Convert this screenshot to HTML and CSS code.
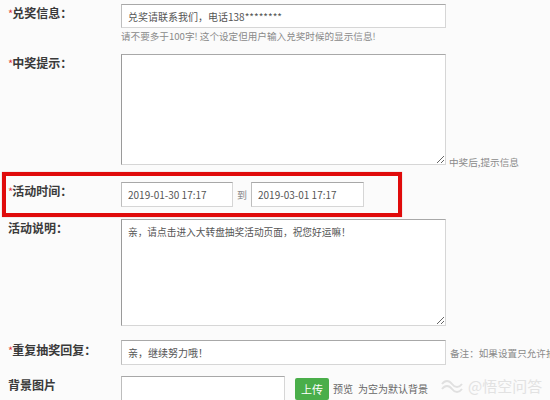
FILE: index.html
```html
<!DOCTYPE html>
<html lang="zh">
<head>
<meta charset="utf-8">
<link rel="stylesheet" href="styles.css">
</head>
<body>
<div class="page">
  <div class="row r1">
    <div class="label"><span class="req">*</span>兑奖信息：</div>
    <div class="field col">
      <input class="txt wide" type="text" value="兑奖请联系我们，电话138********">
      <div class="hint">请不要多于100字! 这个设定但用户输入兑奖时候的显示信息!</div>
    </div>
  </div>
  <div class="row r2">
    <div class="label"><span class="req">*</span>中奖提示：</div>
    <div class="field bottom">
      <textarea class="area a1"></textarea>
      <span class="note note-b">中奖后,提示信息</span>
    </div>
  </div>
  <div class="row r3">
    <div class="label"><span class="req">*</span>活动时间：</div>
    <div class="field mid">
      <input class="txt date d1" type="text" value="2019-01-30 17:17">
      <span class="to">到</span>
      <input class="txt date d2" type="text" value="2019-03-01 17:17">
    </div>
  </div>
  <div class="row r4">
    <div class="label">活动说明：</div>
    <div class="field">
      <textarea class="area a2">亲，请点击进入大转盘抽奖活动页面，祝您好运嘛！</textarea>
    </div>
  </div>
  <div class="row r5">
    <div class="label lh20"><span class="req">*</span>重复抽奖回复：</div>
    <div class="field mid">
      <input class="txt wide h25" type="text" value="亲，继续努力哦！">
      <span class="note note-r">备注：如果设置只允许抽</span>
    </div>
  </div>
  <div class="row r6">
    <div class="label">背景图片</div>
    <div class="field top">
      <input class="txt bg" type="text" value="">
      <button class="upload" type="button">上传</button>
      <span class="link">预览</span>
      <span class="tip">为空为默认背景</span>
    </div>
  </div>

  <div class="mark"></div>
  <div class="watermark">
    <svg class="wm-logo" width="24" height="14" viewBox="0 0 24 14">
      <path d="M2 5 C5 1 9 1 12 5 C15 9 19 9 22 5" fill="none" stroke="#e0e0e0" stroke-width="2"/>
      <path d="M2 10 C5 6 9 6 12 10 C15 14 19 14 22 10" fill="none" stroke="#e0e0e0" stroke-width="2"/>
    </svg>
    <span class="wm-text">@悟空问答</span>
  </div>
</div>
</body>
</html>
```

FILE: styles.css
```css
html, body {
  margin: 0;
  padding: 0;
  background: #fbfbfb;
}
.page {
  position: relative;
  width: 550px;
  height: 400px;
  overflow: hidden;
  padding-left: 8px;
  box-sizing: border-box;
  font-family: "Noto Sans CJK SC", "Microsoft YaHei", sans-serif;
  color: #555;
}
.row {
  display: flex;
  align-items: flex-start;
}
.label {
  width: 113px;
  flex: none;
  font-size: 12px;
  line-height: 18px;
  font-weight: bold;
  color: #3a3a3a;
  white-space: nowrap;
}
.lh20 { line-height: 20px; }
.req {
  color: #e23b3b;
  font-weight: normal;
  font-size: 11px;
  margin-right: -1px;
}
.field {
  display: flex;
  align-items: flex-start;
}
.field.col { flex-direction: column; }
.field.bottom { align-items: flex-end; }
.field.mid { align-items: center; }
.field.top { align-items: flex-start; }

.txt {
  box-sizing: border-box;
  margin: 0;
  padding: 0 6px;
  background: #fff;
  border: 1px solid #d6d6d6;
  border-top-color: #a8a8a8;
  border-left-color: #bdbdbd;
  font-family: "Noto Sans CJK SC", sans-serif;
  font-size: 10px;
  color: #555;
  outline: none;
}
.wide { width: 325px; height: 24px; }
.h25 { height: 25px; }
.hint {
  margin-top: 1px;
  font-size: 9.6px;
  line-height: 14px;
  color: #8a8a8a;
  white-space: nowrap;
}
.area {
  box-sizing: border-box;
  margin: 0;
  width: 325px;
  padding: 5px 6px;
  background: #fff;
  border: 1px solid #d6d6d6;
  border-top-color: #a8a8a8;
  border-left-color: #9a9a9a;
  font-family: "Noto Sans CJK SC", sans-serif;
  font-size: 9.7px;
  line-height: 14px;
  color: #555;
  outline: none;
  display: block;
}
.a1 { height: 111px; }
.a2 { height: 107px; }
.note {
  font-size: 9.6px;
  color: #8a8a8a;
  white-space: nowrap;
}
.note-b { margin-left: 3px; line-height: 12px; margin-bottom: -3px; }
.note-r { margin-left: 4px; }

.r1 { margin-top: 4px; }
.r2 { margin-top: 11px; }
.r3 { margin-top: 17px; }
.r4 { margin-top: 12px; }
.r5 { margin-top: 14px; }
.r6 { margin-top: 11px; }

.date { height: 25px; font-size: 10px; }
.d1 { width: 112px; }
.d2 { width: 113px; }
.to {
  font-size: 10px;
  color: #8a8a8a;
  margin: 0 4px 0 4px;
}
.bg { width: 164px; height: 26px; }
.upload {
  margin: 2px 0 0 10px;
  width: 34px;
  height: 22px;
  padding: 0;
  border: none;
  border-radius: 2px;
  background: #4aae4a;
  color: #fff;
  font-family: "Noto Sans CJK SC", sans-serif;
  font-size: 11px;
  line-height: 22px;
}
.link, .tip {
  font-size: 10px;
  line-height: 22px;
  margin-top: 2px;
  color: #666;
  white-space: nowrap;
}
.link { margin-left: 4px; }
.tip { margin-left: 5px; }

.mark {
  position: absolute;
  left: 2px;
  top: 172px;
  width: 400px;
  height: 45px;
  box-sizing: border-box;
  border: 4px solid #e00b0b;
  box-shadow: 0 0 1px rgba(150,0,0,0.4);
}
.watermark {
  position: absolute;
  left: 440px;
  top: 375px;
  display: flex;
  align-items: center;
  gap: 4px;
}
.wm-text {
  font-size: 15px;
  color: #e2e2e2;
  white-space: nowrap;
}
```
